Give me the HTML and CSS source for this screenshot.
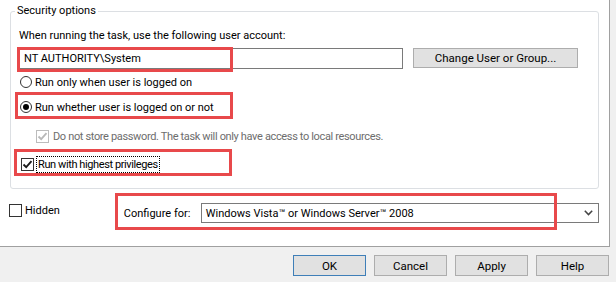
FILE: index.html
```html
<!DOCTYPE html>
<html>
<head>
    <title>Task Properties - General</title>
    <link rel="stylesheet" href="styles.css">
</head>
<body>
<div class="panel">
    <div class="group">
        <span class="group-title">Security options</span>
        <div class="caption">When running the task, use the following user account:</div>
        <div class="account-row">
            <div class="account-field">NT AUTHORITY\System</div>
            <button class="btn btn-wide">Change User or Group...</button>
            <span class="mark mark-account"></span>
        </div>
        <div class="opt opt-first">
            <span class="radio"></span>
            <span>Run only when user is logged on</span>
        </div>
        <div class="opt opt-second">
            <span class="radio checked"></span>
            <span>Run whether user is logged on or not</span>
            <span class="mark mark-opt"></span>
        </div>
        <div class="opt opt-sub disabled">
            <span class="check">
                <svg width="11" height="11" viewBox="0 0 11 11"><path d="M1.5 5.5 L4.2 8.2 L9.5 2.2" fill="none" stroke="#b8b8b8" stroke-width="1.8"/></svg>
            </span>
            <span class="narrow">Do not store password. The task will only have access to local resources.</span>
        </div>
        <div class="opt opt-priv">
            <span class="check">
                <svg width="11" height="11" viewBox="0 0 11 11"><path d="M1.5 5.5 L4.2 8.2 L9.5 2.2" fill="none" stroke="#1a1a1a" stroke-width="1.8"/></svg>
            </span>
            <span class="focused">Run with highest privileges</span>
            <span class="mark mark-priv"></span>
        </div>
    </div>
    <div class="bottom-row">
        <div class="hidden-opt">
            <span class="check"></span>
            <span>Hidden</span>
        </div>
        <div class="configure">
            <span class="configure-label">Configure for:</span>
            <div class="combo">
                <span>Windows Vista™ or Windows Server™ 2008</span>
                <svg width="9" height="6" viewBox="0 0 9 6"><path d="M0.8 0.8 L4.5 4.6 L8.2 0.8" fill="none" stroke="#444" stroke-width="1.5"/></svg>
            </div>
            <span class="mark mark-configure"></span>
        </div>
    </div>
</div>
<div class="footer">
    <button class="btn btn-default">OK</button>
    <button class="btn">Cancel</button>
    <button class="btn">Apply</button>
    <button class="btn">Help</button>
</div>
</body>
</html>
```

FILE: styles.css
```css
body {
    margin: 0;
    font-family: Roboto, "Liberation Sans", sans-serif;
    font-size: 11px;
    line-height: 15px;
    color: #000;
    background-color: #f0f0f0;
}
.panel {
    width: 610px;
    height: 247px;
    box-sizing: border-box;
    background: #fff;
    border-right: 1px solid #a0a0a0;
    border-bottom: 1px solid #a0a0a0;
    padding-top: 11px;
}
.group {
    position: relative;
    width: 589px;
    height: 178px;
    box-sizing: border-box;
    margin-left: 10px;
    border: 1px solid #dcdfe3;
    border-radius: 3px;
    padding-top: 16px;
}
.group-title {
    position: absolute;
    top: -9px;
    left: 4px;
    padding: 0 2px;
    background: #fff;
}
.caption {
    padding-left: 8px;
}
.account-row {
    position: relative;
    display: flex;
    margin-top: 5px;
    padding-left: 6px;
}
.account-field {
    width: 386px;
    height: 21px;
    box-sizing: border-box;
    border: 1px solid #7a7a7a;
    padding: 2px 6px;
}
.btn {
    font-family: inherit;
    font-size: 11.5px;
    height: 21px;
    width: 73px;
    padding: 0;
    background: #e1e1e1;
    border: 1px solid #adadad;
    color: #000;
}
.btn-wide {
    width: 165px;
    height: 20px;
    margin-left: 10px;
}
.btn-default {
    border-color: #3f7fb8;
}
.opt {
    position: relative;
    display: flex;
    align-items: center;
    height: 16px;
    gap: 3px;
    padding-left: 9px;
}
.opt-first {
    margin-top: 5px;
}
.opt-second {
    margin-top: 9px;
}
.opt-sub {
    margin-top: 13px;
    padding-left: 25px;
    gap: 4px;
}
.opt-priv {
    margin-top: 12px;
    padding-left: 10px;
}
.disabled {
    color: #6d6d6d;
}
.narrow {
    letter-spacing: -0.35px;
}
.radio {
    width: 12px;
    height: 12px;
    box-sizing: border-box;
    border: 1px solid #333;
    border-radius: 50%;
    display: flex;
    align-items: center;
    justify-content: center;
}
.radio.checked::after {
    content: "";
    width: 6px;
    height: 6px;
    border-radius: 50%;
    background: #000;
}
.check {
    width: 13px;
    height: 13px;
    box-sizing: border-box;
    border: 1px solid #333;
    display: flex;
    align-items: center;
    justify-content: center;
    flex-shrink: 0;
}
.disabled .check {
    border-color: #bcbcbc;
}
.focused {
    outline: 1px dotted #000;
    padding: 0 1px;
    letter-spacing: -0.4px;
}
.mark {
    position: absolute;
    box-sizing: border-box;
    border: 3px solid #e8494b;
    pointer-events: none;
}
.mark-account {
    left: 6px;
    top: -1px;
    width: 216px;
    height: 25px;
}
.mark-opt {
    left: 4px;
    top: -7px;
    width: 218px;
    height: 27px;
}
.mark-priv {
    left: 3px;
    top: -7px;
    width: 218px;
    height: 27px;
}
.bottom-row {
    display: flex;
    margin-top: 14px;
    height: 20px;
}
.hidden-opt {
    display: flex;
    align-items: center;
    gap: 3px;
    margin: 1px 0 0 9px;
    height: 13px;
}
.configure {
    position: relative;
    display: flex;
    align-items: center;
    margin-left: 64px;
}
.configure-label {
    width: 77px;
}
.combo {
    width: 398px;
    height: 20px;
    box-sizing: border-box;
    border: 1px solid #7a7a7a;
    display: flex;
    align-items: center;
    justify-content: space-between;
    padding: 0 5px 0 4px;
}
.mark-configure {
    left: -9px;
    top: -10px;
    width: 442px;
    height: 37px;
}
.footer {
    display: flex;
    justify-content: flex-end;
    gap: 8px;
    padding: 8px 7px 0 0;
}
```
